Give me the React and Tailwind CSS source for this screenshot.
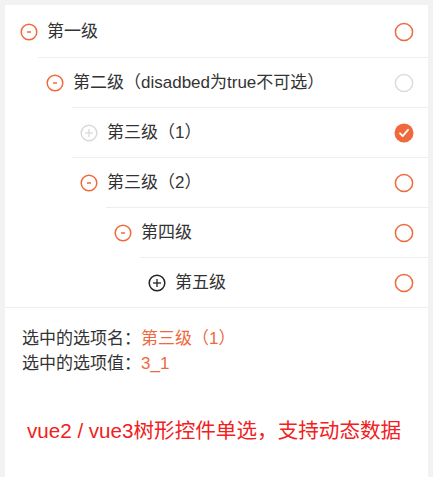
import React from 'react';

const ORANGE = '#f0693c';

const rows = [
  { label: '第一级', icon: 'minus', line: 'ml-0', pad: 'pl-[15px]', state: 'off', first: true },
  { label: '第二级（disadbed为true不可选）', icon: 'minus', line: 'ml-[33px]', pad: 'pl-[8px]', state: 'disabled' },
  { label: '第三级（1）', icon: 'plus-disabled', line: 'ml-[67px]', pad: 'pl-[8px]', state: 'on' },
  { label: '第三级（2）', icon: 'minus', line: 'ml-[67px]', pad: 'pl-[8px]', state: 'off' },
  { label: '第四级', icon: 'minus', line: 'ml-[101px]', pad: 'pl-[8px]', state: 'off' },
  { label: '第五级', icon: 'plus', line: 'ml-[135px]', pad: 'pl-[8px]', state: 'off' },
];

function ToggleIcon({ type }) {
  const color = type === 'minus' ? ORANGE : type === 'plus' ? '#222' : '#d9d9d9';
  return (
    <svg width="18" height="18" viewBox="0 0 18 18" className="shrink-0">
      <circle cx="9" cy="9" r="7.8" fill="none" stroke={color} strokeWidth="1.5" />
      {type === 'minus' ? (
        <line x1="7" y1="9" x2="11" y2="9" stroke={color} strokeWidth="1.5" />
      ) : (
        <>
          <line x1="5" y1="9" x2="13" y2="9" stroke={color} strokeWidth="1.3" />
          <line x1="9" y1="5" x2="9" y2="13" stroke={color} strokeWidth="1.3" />
        </>
      )}
    </svg>
  );
}

function Radio({ state }) {
  if (state === 'on') {
    return (
      <svg width="20" height="20" viewBox="0 0 20 20">
        <circle cx="10" cy="10" r="9.5" fill={ORANGE} />
        <path d="M6 10.3l2.7 2.8 5.3-6.3" fill="none" stroke="#fff" strokeWidth="1.8" strokeLinecap="round" strokeLinejoin="round" />
      </svg>
    );
  }
  const color = state === 'disabled' ? '#dcdcdc' : ORANGE;
  return (
    <svg width="20" height="20" viewBox="0 0 20 20">
      <circle cx="10" cy="10" r="8.6" fill="none" stroke={color} strokeWidth="1.5" />
    </svg>
  );
}

export default function App() {
  return (
    <div
      className="min-h-[477px] bg-[#f2f2f2] p-[5px] pb-0"
      style={{ fontFamily: '"Liberation Sans", "Noto Sans CJK SC", sans-serif' }}
    >
      <div className="bg-white min-h-[472px]">
        {/* tree */}
        <div className="border-b border-[#eeeeee]">
          {rows.map((row) => (
            <div
              key={row.label}
              className={`${row.line} ${row.first ? 'h-[52px] pt-px' : 'h-[50px] border-t border-[#eeeeee]'} flex items-center pr-[14px]`}
            >
              <div className={`${row.pad} flex items-center gap-[9px] flex-1`}>
                <ToggleIcon type={row.icon} />
                <span className="text-[17px] text-[#333333] leading-none">{row.label}</span>
              </div>
              <Radio state={row.state} />
            </div>
          ))}
        </div>

        {/* selected info */}
        <div className="px-[17px] pt-[18px] text-[17px] leading-[25px] text-[#333333]">
          <p>
            选中的选项名：<span className="text-[#f0693c]">第三级（1）</span>
          </p>
          <p>
            选中的选项值：<span className="text-[#f0693c]">3_1</span>
          </p>
        </div>

        <p className="px-[22px] mt-[41px] text-[20.6px] leading-[28px] text-[#f22020]">
          vue2 / vue3树形控件单选，支持动态数据
        </p>
      </div>
    </div>
  );
}
